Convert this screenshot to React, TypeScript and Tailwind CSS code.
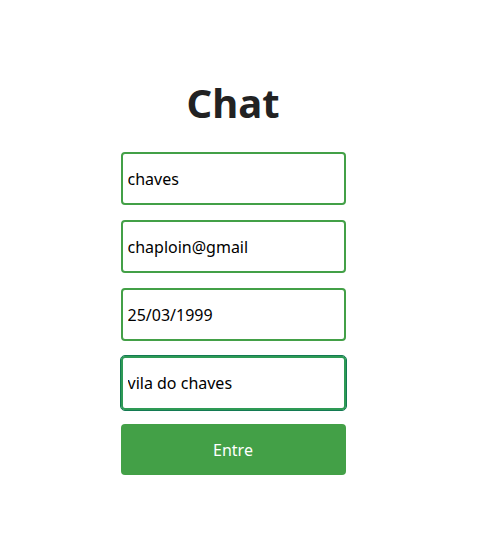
const fields = ["chaves", "chaploin@gmail", "25/03/1999"];

export default function App() {
  return (
    <div className="min-h-[546px] bg-white pr-[13px] pt-[78px] flex justify-center" style={{ fontFamily: '"Noto Sans", "Open Sans", sans-serif' }}>
      <div className="w-[225px] flex flex-col">
        <h1 className="text-center text-[40px] font-bold leading-[50px] text-[#222222]">Chat</h1>
        <div className="mt-[24px] flex flex-col gap-[15px]">
          {fields.map((v) => (
            <input
              key={v}
              defaultValue={v}
              className="h-[53px] w-full rounded-[4px] border-2 border-[#43a047] px-[5px] text-[16px] text-black outline-none"
            />
          ))}
          <input
            defaultValue="vila do chaves"
            className="h-[54px] w-full rounded-[4px] border-2 border-[#2e9a55] px-[5px] text-[16px] text-black outline outline-1 outline-[#137a52]"
          />
          <button className="mt-[-1px] h-[51px] w-full rounded-[4px] bg-[#43a047] text-[16px] text-white">Entre</button>
        </div>
      </div>
    </div>
  );
}
